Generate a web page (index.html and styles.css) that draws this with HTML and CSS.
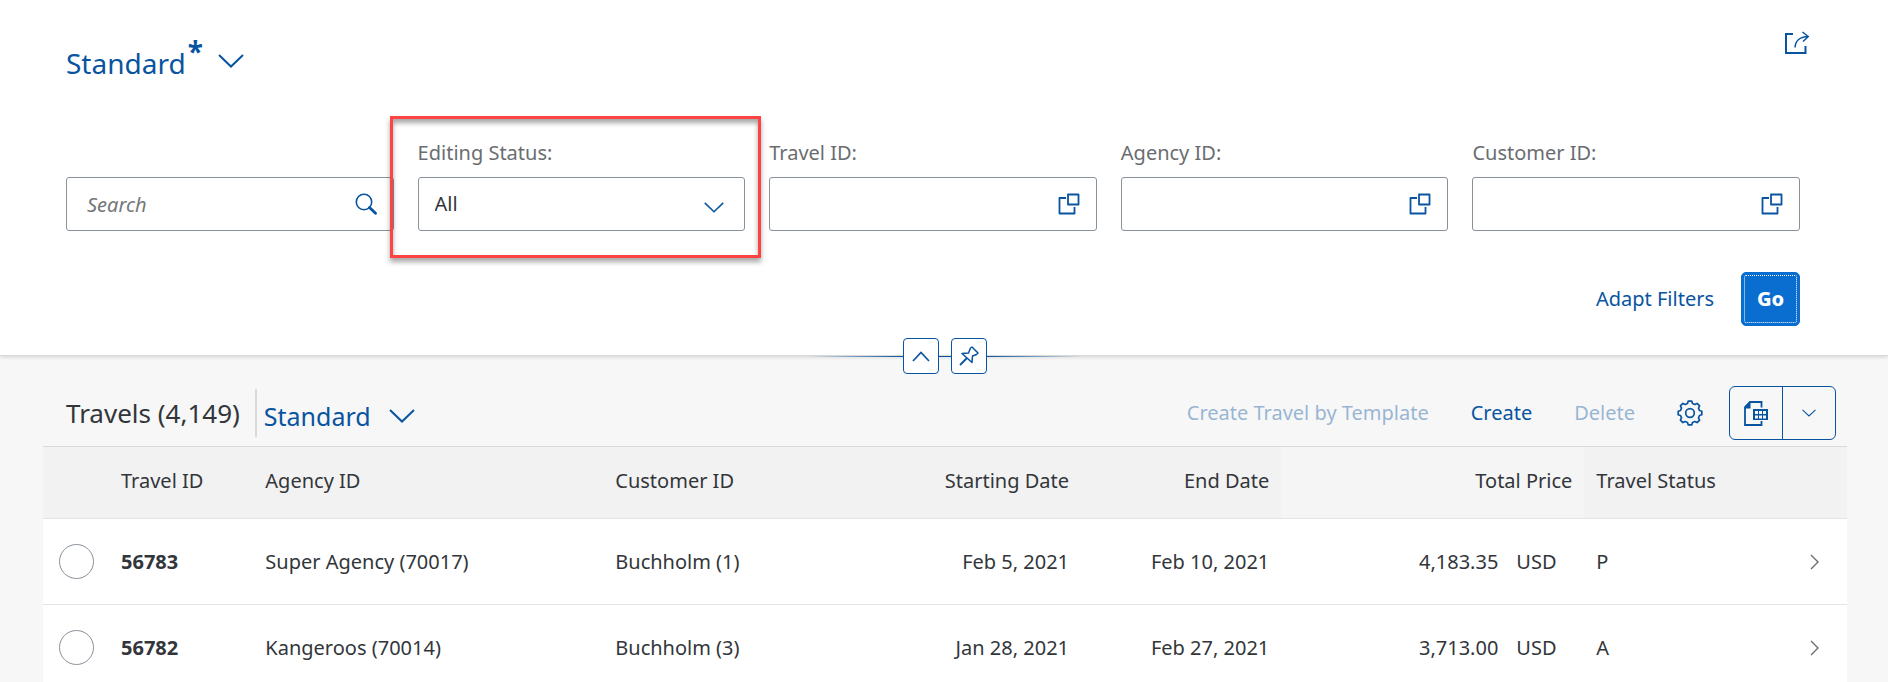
FILE: index.html
```html
<!DOCTYPE html>
<html lang="en">
<head>
<meta charset="utf-8">
<title>Travels</title>
<link rel="stylesheet" href="styles.css">
</head>
<body>
<svg class="sprite" aria-hidden="true">
  <symbol id="value-help" viewBox="0 0 22 22">
    <path d="M8 5H1.500V20.500H16.500V14M10 1.500H20.500V11.500H10Z" fill="none" stroke="currentColor" stroke-width="1.800" stroke-linejoin="round"/>
  </symbol>
  <symbol id="chevron" viewBox="0 0 26 14">
    <path d="M1 1L13 12.500L25 1" fill="none" stroke="currentColor" stroke-width="2"/>
  </symbol>
  <symbol id="nav" viewBox="0 0 9 16">
    <path d="M1 1L8 8L1 15" fill="none" stroke="currentColor" stroke-width="1.400"/>
  </symbol>
</svg>

<header class="page-header">
  <div class="title-row">
    <button class="variant variant-page" type="button">
      <span>Standard</span><span class="dirty">*</span>
      <svg class="chevron-lg"><use href="#chevron"/></svg>
    </button>
    <button class="icon-button" type="button" aria-label="Share">
      <svg class="share-icon" viewBox="0 0 26 24" fill="none" stroke="currentColor">
        <path d="M9 3H2V22H21.500V15" stroke-width="2"/>
        <path d="M11 16.500C11.500 9.500 15 6 24 5.500M18.500 1L24.200 5.500L19 10.500" stroke-width="1.500"/>
      </svg>
    </button>
  </div>

  <form class="filters">
    <div class="field">
      <div class="control">
        <input class="input search-input" type="search" placeholder="Search" aria-label="Search">
        <button class="icon-button" type="button" aria-label="Run search">
          <svg class="icon-22" viewBox="0 0 22 22" fill="none" stroke="currentColor">
            <circle cx="9" cy="9" r="7.700" stroke-width="1.600"/>
            <path d="M14.500 14.500L20.500 20.300" stroke-width="2.800" stroke-linecap="round"/>
          </svg>
        </button>
      </div>
    </div>
    <div class="field highlighted">
      <label class="label" for="editing-status">Editing Status:</label>
      <div class="control">
        <select class="input select" id="editing-status"><option>All</option></select>
        <svg class="select-arrow"><use href="#chevron"/></svg>
      </div>
    </div>
    <div class="field">
      <label class="label" for="travel-id">Travel ID:</label>
      <div class="control">
        <input class="input" id="travel-id" type="text">
        <button class="icon-button" type="button" aria-label="Travel ID value help"><svg class="icon-22"><use href="#value-help"/></svg></button>
      </div>
    </div>
    <div class="field">
      <label class="label" for="agency-id">Agency ID:</label>
      <div class="control">
        <input class="input" id="agency-id" type="text">
        <button class="icon-button" type="button" aria-label="Agency ID value help"><svg class="icon-22"><use href="#value-help"/></svg></button>
      </div>
    </div>
    <div class="field">
      <label class="label" for="customer-id">Customer ID:</label>
      <div class="control">
        <input class="input" id="customer-id" type="text">
        <button class="icon-button" type="button" aria-label="Customer ID value help"><svg class="icon-22"><use href="#value-help"/></svg></button>
      </div>
    </div>
  </form>

  <div class="filter-actions">
    <button class="text-button" type="button">Adapt Filters</button>
    <button class="go-button" type="button">Go</button>
  </div>

  <div class="header-toggles">
    <button class="toggle" type="button" aria-label="Collapse header">
      <svg class="collapse-icon" viewBox="0 0 18 11"><path d="M1 10L9 1.500L17 10" fill="none" stroke="currentColor" stroke-width="1.700"/></svg>
    </button>
    <button class="toggle" type="button" aria-label="Pin header">
      <svg class="pin-icon" viewBox="0 0 20 20" fill="none" stroke="currentColor" stroke-width="1.500" stroke-linejoin="round">
        <path d="M13 1L19 7L17.500 8.500L13.500 10L13 16.500L3 7.500L9.500 7L11.500 2Z"/>
        <path d="M8 12L1 19" stroke-width="1.800"/>
      </svg>
    </button>
  </div>
</header>

<main class="content">
  <div class="toolbar">
    <h2 class="table-title">Travels (4,149)</h2>
    <span class="separator"></span>
    <button class="variant variant-table" type="button">
      <span>Standard</span>
      <svg class="chevron-lg"><use href="#chevron"/></svg>
    </button>
    <div class="toolbar-actions">
      <button class="text-button" type="button" disabled>Create Travel by Template</button>
      <button class="text-button" type="button">Create</button>
      <button class="text-button" type="button" disabled>Delete</button>
      <button class="icon-button" type="button" aria-label="Settings">
        <svg class="gear-icon" viewBox="0 0 26 26" fill="none" stroke="currentColor" stroke-width="1.700" stroke-linejoin="round">
          <path d="M10.500 3.500L11.200 1.200H14.800L15.500 3.500L17.900 4.500L20.100 3.400L22.600 5.900L21.500 8.100L22.500 10.500L24.800 11.200V14.800L22.500 15.500L21.500 17.900L22.600 20.100L20.100 22.600L17.900 21.500L15.500 22.500L14.800 24.800H11.200L10.500 22.500L8.100 21.500L5.900 22.600L3.400 20.100L4.500 17.900L3.500 15.500L1.200 14.800V11.200L3.500 10.500L4.500 8.100L3.400 5.900L5.900 3.400L8.100 4.500Z"/>
          <circle cx="13" cy="13" r="4.300"/>
        </svg>
      </button>
      <div class="split-button">
        <button class="split-part" type="button" aria-label="Export to spreadsheet">
          <svg class="export-icon" viewBox="0 0 26 26">
            <path d="M18.500 7.500V2H7L2 7V25H18.500V21" fill="none" stroke="currentColor" stroke-width="1.800"/>
            <path d="M1.500 8L7.500 1.500V8.500H1.500Z" fill="currentColor"/>
            <rect x="10" y="9" width="15" height="11" fill="currentColor"/>
            <path d="M12 11h3v3h-3zM16 11h3v3h-3zM20 11h3v3h-3zM12 15.500h3v3h-3zM16 15.500h3v3h-3zM20 15.500h3v3h-3z" fill="#f7f7f7"/>
          </svg>
        </button>
        <button class="split-part" type="button" aria-label="Export options"><svg class="chevron-sm"><use href="#chevron"/></svg></button>
      </div>
    </div>
  </div>

  <table class="travels">
    <colgroup>
      <col class="col-select"><col class="col-id"><col class="col-agency"><col>
      <col class="col-date"><col class="col-date"><col class="col-price"><col class="col-status"><col class="col-nav">
    </colgroup>
    <thead>
      <tr>
        <th></th><th>Travel ID</th><th>Agency ID</th><th>Customer ID</th>
        <th class="end">Starting Date</th><th class="end">End Date</th><th class="end price-head">Total Price</th><th>Travel Status</th><th></th>
      </tr>
    </thead>
    <tbody>
      <tr>
        <td class="select-cell"><input class="radio" type="radio" name="row" aria-label="Select 56783"></td>
        <td class="strong">56783</td><td>Super Agency (70017)</td><td>Buchholm (1)</td>
        <td class="end">Feb 5, 2021</td><td class="end">Feb 10, 2021</td>
        <td class="end">4,183.35<span class="currency">USD</span></td><td>P</td>
        <td class="nav-cell"><svg class="nav-icon"><use href="#nav"/></svg></td>
      </tr>
      <tr>
        <td class="select-cell"><input class="radio" type="radio" name="row" aria-label="Select 56782"></td>
        <td class="strong">56782</td><td>Kangeroos (70014)</td><td>Buchholm (3)</td>
        <td class="end">Jan 28, 2021</td><td class="end">Feb 27, 2021</td>
        <td class="end">3,713.00<span class="currency">USD</span></td><td>A</td>
        <td class="nav-cell"><svg class="nav-icon"><use href="#nav"/></svg></td>
      </tr>
    </tbody>
  </table>
</main>
</body>
</html>
```
FILE: styles.css
```css
:root {
  --blue: #0854a0;
  --text: #32363a;
  --label: #6a6d70;
  --field-border: #89919a;
  --line: #e4e4e4;
}

* { box-sizing: border-box; }

body {
  margin: 0;
  background: #f7f7f7;
  color: var(--text);
  font: 20px/24px "Noto Sans", "Open Sans", sans-serif;
}

button, input, select { font: inherit; color: inherit; }

button {
  padding: 0;
  border: 0;
  background: none;
  color: var(--blue);
}

svg { display: block; flex: none; }
.sprite { position: absolute; width: 0; height: 0; }

.page-header {
  position: relative;
  padding: 31px 88px 29px 66px;
  background: #fff;
  border-bottom: 1px solid #d9d9d9;
  box-shadow: 0 1px 4px rgba(0, 0, 0, 0.15);
}

.title-row {
  display: flex;
  justify-content: space-between;
  align-items: flex-start;
  margin-right: -10px;
}

.variant { display: flex; }
.variant-page { padding-top: 12px; font-size: 28px; line-height: 40px; }
.dirty { margin: -8px 15px 0 2px; font-weight: 700; line-height: 32px; }
.variant-page .chevron-lg { margin-top: 11px; }
.chevron-lg { width: 26px; height: 14px; }
.chevron-sm { width: 14px; height: 8px; }

.share-icon { width: 26px; height: 24px; }
.icon-22 { width: 22px; height: 22px; }

.filters {
  display: grid;
  grid-template-columns: repeat(5, 1fr);
  gap: 24px;
  align-items: end;
  margin-top: 58px;
}

.field { position: relative; min-width: 0; }
.label { display: block; margin-bottom: 12px; color: var(--label); }

.control {
  position: relative;
  display: flex;
  align-items: center;
  height: 54px;
  padding-right: 16px;
  border: 1px solid var(--field-border);
  border-radius: 3px;
  background: #fff;
}

.input {
  flex: 1;
  min-width: 0;
  height: 100%;
  padding: 0 16px;
  border: 0;
  outline: 0;
  background: transparent;
  appearance: none;
}

.search-input { padding-left: 20px; }
.search-input::placeholder { color: #74777a; font-style: italic; opacity: 1; }

.select-arrow {
  position: absolute;
  right: 20px;
  top: 24px;
  width: 20px;
  height: 11px;
  color: var(--blue);
  pointer-events: none;
}

.highlighted::after {
  content: "";
  position: absolute;
  inset: -25px -16px -27px -28px;
  border: 3px solid #ff4343;
  box-shadow: 0 4px 5px rgba(0, 0, 0, 0.35), inset 0 4px 5px rgba(0, 0, 0, 0.35);
  pointer-events: none;
}

.filter-actions {
  display: flex;
  justify-content: flex-end;
  align-items: center;
  gap: 27px;
  margin-top: 41px;
}

.go-button {
  width: 59px;
  height: 54px;
  border: 1px solid #0a6ed1;
  border-radius: 5px;
  outline: 1px dotted #fff;
  outline-offset: -4px;
  background: #0a6ed1;
  color: #fff;
  font-weight: 800;
}

.header-toggles {
  position: absolute;
  left: 50%;
  bottom: -19px;
  display: flex;
  justify-content: center;
  gap: 12px;
  width: 274px;
  margin-left: -136px;
  background: linear-gradient(90deg, transparent, var(--blue) 35%, var(--blue) 65%, transparent) center / 100% 1px no-repeat;
}

.toggle {
  display: grid;
  place-items: center;
  width: 36px;
  height: 36px;
  border: 1px solid var(--blue);
  border-radius: 4px;
  background: #fff;
}

.collapse-icon { width: 18px; height: 11px; }
.pin-icon { width: 20px; height: 20px; }

.content { padding: 30px 41px 0 43px; }

.toolbar {
  display: flex;
  align-items: center;
  padding: 0 11px 6px 23px;
  border-bottom: 1px solid #d9d9d9;
}

.table-title { margin: 0; font-size: 26px; font-weight: 400; line-height: 32px; }
.separator { width: 2px; height: 48px; margin: 0 7px 0 15px; background: #d9d9d9; }
.variant-table { align-items: center; gap: 18px; padding-top: 6px; font-size: 25px; line-height: 32px; }
.toolbar-actions { display: flex; align-items: center; gap: 42px; margin-left: auto; }
.text-button:disabled { opacity: 0.4; }
.gear-icon { width: 26px; height: 26px; }

.split-button {
  display: flex;
  height: 54px;
  margin-left: -16px;
  border: 1px solid var(--blue);
  border-radius: 6px;
}

.split-part { display: grid; place-items: center; width: 52px; }
.split-part + .split-part { width: 53px; border-left: 1px solid var(--blue); }
.export-icon { width: 26px; height: 26px; }

.travels {
  width: 100%;
  border-collapse: collapse;
  table-layout: fixed;
}

.col-select { width: 66px; }
.col-id { width: 8%; }
.col-agency { width: 19.4%; }
.col-date { width: 11.1%; }
.col-price { width: 16.8%; }
.col-status { width: 11.4%; }
.col-nav { width: 57px; }

.travels th {
  height: 71px;
  padding: 0 12px 3px;
  border-bottom: 1px solid var(--line);
  background: #f2f2f2;
  font-weight: 400;
  text-align: left;
}

.travels td {
  height: 86px;
  padding: 1px 12px 0;
  border-bottom: 1px solid var(--line);
  background: #fff;
}

.travels .end { text-align: right; }
.travels .price-head { background: #f5f5f5; }
.strong { font-weight: 700; }
.currency { display: inline-block; width: 56px; margin-left: 18px; text-align: left; }

.travels .select-cell { padding-left: 16px; }

.radio {
  display: block;
  width: 35px;
  height: 35px;
  margin: 0;
  border: 1px solid var(--field-border);
  border-radius: 50%;
  background: #fff;
  appearance: none;
}

.nav-cell { color: var(--label); }
.nav-icon { width: 9px; height: 16px; margin-left: 8px; }
```
